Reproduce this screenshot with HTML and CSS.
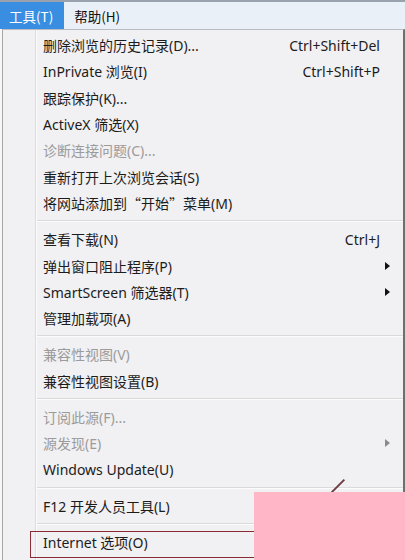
FILE: index.html
```html
<!DOCTYPE html>
<html lang="zh">
<head>
  <meta charset="UTF-8">
  <title>工具菜单</title>
  <link rel="stylesheet" href="styles.css">
</head>
<body>
  <div class="screen">
    <div class="menubar">
      <span class="menubar-item active">工具(T)</span>
      <span class="menubar-item">帮助(H)</span>
    </div>

    <div class="dropdown">
      <div class="gutter-line"></div>

      <div class="item"><span class="label">删除浏览的历史记录(D)...</span><span class="key">Ctrl+Shift+Del</span></div>
      <div class="item"><span class="label">InPrivate 浏览(I)</span><span class="key">Ctrl+Shift+P</span></div>
      <div class="item"><span class="label">跟踪保护(K)...</span></div>
      <div class="item"><span class="label">ActiveX 筛选(X)</span></div>
      <div class="item disabled"><span class="label">诊断连接问题(C)...</span></div>
      <div class="item"><span class="label">重新打开上次浏览会话(S)</span></div>
      <div class="item"><span class="label">将网站添加到<span class="cjk">“</span>开始<span class="cjk">”</span>菜单(M)</span></div>
      <div class="sep"></div>
      <div class="item"><span class="label">查看下载(N)</span><span class="key">Ctrl+J</span></div>
      <div class="item"><span class="label">弹出窗口阻止程序(P)</span><span class="arrow"></span></div>
      <div class="item"><span class="label">SmartScreen 筛选器(T)</span><span class="arrow"></span></div>
      <div class="item"><span class="label">管理加载项(A)</span></div>
      <div class="sep"></div>
      <div class="item disabled"><span class="label">兼容性视图(V)</span></div>
      <div class="item"><span class="label">兼容性视图设置(B)</span></div>
      <div class="sep"></div>
      <div class="item disabled"><span class="label">订阅此源(F)...</span></div>
      <div class="item disabled"><span class="label">源发现(E)</span><span class="arrow"></span></div>
      <div class="item"><span class="label">Windows Update(U)</span></div>
      <div class="sep"></div>
      <div class="item"><span class="label">F12 开发人员工具(L)</span></div>
      <div class="sep"></div>
      <div class="item"><span class="label">Internet 选项(O)</span></div>
    </div>

    <!-- 标注：红框 + 粉色遮挡块 -->
    <div class="mark-box"></div>
    <div class="mark-line"></div>
    <div class="pink-block"></div>
  </div>
</body>
</html>
```

FILE: styles.css
```css
body, html {
  margin: 0; padding: 0;
  background: #fff;
  font-family: "Noto Sans", "Noto Sans CJK SC", sans-serif;
  overflow: hidden;
}
.screen {
  position: relative;
  width: 405px; height: 560px;
  overflow: hidden;
  background: #f7f7f7;
}
.menubar {
  display: flex;
  height: 27px;
  border-top: 2px solid #9aa3ad;
  background: #eaf0f8;
  font-family: "Noto Sans CJK SC", sans-serif;
  font-size: 13.5px;
  color: #111;
}
.menubar-item {
  display: flex; align-items: center;
  padding: 0 10px;
}
.menubar-item.active {
  background: #3a8ee2;
  color: #fff;
  padding: 0 11px 0 9px;
}
.dropdown {
  position: relative;
  display: flex;
  flex-direction: column;
  margin-left: 2px;
  padding-top: 2px;
  height: 560px;
  background: #f1f0f2;
  border-left: 1px solid #a7a7a7;
  border-right: 2px solid #6f6f6f;
  border-top: 1px solid #b9bcc2;
  font-size: 14px;
  color: #1c1c1c;
}
.gutter-line {
  position: absolute;
  top: 0; bottom: 0; left: 32px;
  border-left: 1px solid #dcdcdc;
  border-right: 1px solid #fbfbfb;
}
.item {
  display: flex;
  align-items: center;
  height: 26.3px;
  padding-left: 40px;
  padding-right: 23px;
  white-space: nowrap;
}
.item .label { flex: 1; }
.item .key { font-size: 14px; }
.item .cjk { font-family: "Noto Sans CJK SC", sans-serif; }
.item.disabled { color: #9b9b9b; }
.arrow {
  width: 0; height: 0;
  margin-right: -10px;
  border-left: 5px solid #111;
  border-top: 4px solid transparent;
  border-bottom: 4px solid transparent;
}
.item.disabled .arrow { border-left-color: #8a8a8a; }
.sep {
  height: 10px;
  display: flex; align-items: center;
  padding-left: 34px;
}
.sep::after {
  content: "";
  flex: 1;
  border-top: 1px solid #dadada;
  border-bottom: 1px solid #fcfcfc;
}
.mark-box {
  position: absolute;
  left: 30px; top: 531px;
  width: 260px; height: 25px;
  border: 1.5px solid #8a2c35;
}
.mark-line {
  position: absolute;
  left: 329px; top: 485px;
  width: 18px; height: 2px;
  background: #6b3a40;
  transform: rotate(-45deg);
}
.pink-block {
  position: absolute;
  left: 254px; top: 492px;
  width: 151px; height: 68px;
  background: #ffb6c7;
}
```
